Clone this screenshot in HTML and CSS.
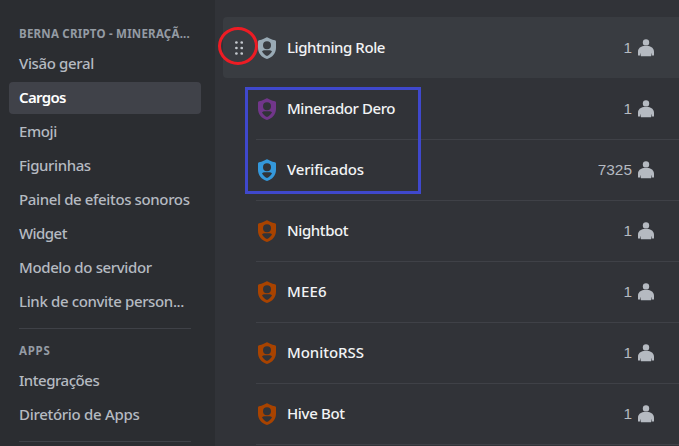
FILE: index.html
```html
<!DOCTYPE html>
<html lang="pt-BR">
<head>
<meta charset="utf-8">
<title>Cargos</title>
<link rel="stylesheet" href="styles.css">
</head>
<body>
<svg class="defs" width="0" height="0" aria-hidden="true">
  <symbol id="shield" viewBox="0 0 18 22">
    <path fill-rule="evenodd" d="M9 0C10 .9 14 2.900 17 3.300Q18 3.500 18 4.500V11C18 16 14.600 20.400 9 22C3.400 20.400 0 16 0 11V4.500Q0 3.500 1 3.300C4 2.900 8 .9 9 0ZM9 4.300A4 4 0 0 0 9 12.300A4 4 0 0 0 9 4.300ZM4 14.200C5 16.300 6.800 18 9 18.900C11.200 18 13 16.300 14 14.200C13.300 13.500 12.400 13.300 11.600 13.300H6.400C5.600 13.300 4.700 13.500 4 14.200Z"/>
  </symbol>
  <symbol id="person" viewBox="0 0 16 18">
    <circle cx="8" cy="3.400" r="3.200"/>
    <path d="M0 16.500V12.800C0 9.500 2.500 7.500 5.500 7H10.500C13.500 7.500 16 9.500 16 12.800V16.500H13.600V14.500H13.100V17.300H2.900V14.500H2.400V16.500Z"/>
  </symbol>
  <symbol id="grip" viewBox="0 0 8 14">
    <circle cx="1.400" cy="1.500" r="1.350"/><circle cx="6.700" cy="1.500" r="1.350"/>
    <circle cx="1.400" cy="7" r="1.350"/><circle cx="6.700" cy="7" r="1.350"/>
    <circle cx="1.400" cy="12.500" r="1.350"/><circle cx="6.700" cy="12.500" r="1.350"/>
  </symbol>
</svg>
<div class="app">
  <nav class="sidebar">
    <h2 class="heading server">BERNA CRIPTO - MINERAÇÃ...</h2>
    <a class="item"><span class="t1">Visão geral</span></a>
    <a class="item active"><span class="t2">Cargos</span></a>
    <a class="item"><span class="t3">Emoji</span></a>
    <a class="item"><span class="t4">Figurinhas</span></a>
    <a class="item"><span class="t5">Painel de efeitos sonoros</span></a>
    <a class="item"><span class="t6">Widget</span></a>
    <a class="item"><span class="t7">Modelo do servidor</span></a>
    <a class="item"><span class="t8">Link de convite person...</span></a>
    <hr class="rule">
    <h2 class="heading apps">APPS</h2>
    <a class="item"><span class="t9">Integrações</span></a>
    <a class="item"><span class="t10">Diretório de Apps</span></a>
    <hr class="rule">
  </nav>
  <main class="roles">
    <div class="role hovered"><svg class="grip"><use href="#grip"/></svg><svg class="shield silver"><use href="#shield"/></svg><span class="name r1">Lightning Role</span><span class="count">1</span><svg class="person"><use href="#person"/></svg></div>
    <div class="role"><svg class="shield purple"><use href="#shield"/></svg><span class="name r2">Minerador Dero</span><span class="count">1</span><svg class="person"><use href="#person"/></svg></div>
    <div class="role"><svg class="shield blue"><use href="#shield"/></svg><span class="name r3">Verificados</span><span class="count">7325</span><svg class="person"><use href="#person"/></svg></div>
    <div class="role"><svg class="shield"><use href="#shield"/></svg><span class="name r4">Nightbot</span><span class="count">1</span><svg class="person"><use href="#person"/></svg></div>
    <div class="role"><svg class="shield"><use href="#shield"/></svg><span class="name r5">MEE6</span><span class="count">1</span><svg class="person"><use href="#person"/></svg></div>
    <div class="role"><svg class="shield"><use href="#shield"/></svg><span class="name r6">MonitoRSS</span><span class="count">1</span><svg class="person"><use href="#person"/></svg></div>
    <div class="role"><svg class="shield"><use href="#shield"/></svg><span class="name r7">Hive Bot</span><span class="count">1</span><svg class="person"><use href="#person"/></svg></div>
  </main>
  <div class="mark-circle"></div>
  <div class="mark-box"></div>
</div>
</body>
</html>
```
FILE: styles.css
```css
* { box-sizing: border-box; }
body { margin: 0; background: #313338; font-family: "Noto Sans", sans-serif; }
.defs { position: absolute; }
.app { position: relative; display: flex; width: 679px; height: 446px; overflow: hidden; }
.sidebar { width: 215px; flex: none; background: #2b2d31; padding: 26px 14px 0 9px; }
.heading { margin: 0 10px; height: 16px; font-size: 11.5px; line-height: 16px; font-weight: 700; color: #949ba4; white-space: nowrap; }
.server { margin-bottom: 6px; letter-spacing: .23px; }
.apps { margin-bottom: 6px; letter-spacing: .75px; }
.item { display: flex; align-items: center; height: 32px; margin-bottom: 2px; padding: 0 10px 2px; border-radius: 4px; font-size: 15px; line-height: 20px; font-weight: 500; color: #b5bac1; white-space: nowrap; }
.active { background: #404249; color: #fff; font-weight: 600; }
.rule { height: 1px; margin: 10px 10px 14px; border: 0; background: #3f4147; }
.t1 { letter-spacing: -.35px; }
.t2 { letter-spacing: -.65px; }
.t3 { letter-spacing: -.4px; }
.t4 { letter-spacing: -.4px; }
.t5 { letter-spacing: -.37px; }
.t6 { letter-spacing: -.55px; }
.t7 { letter-spacing: -.37px; }
.t8 { letter-spacing: -.36px; }
.t9 { letter-spacing: -.47px; }
.t10 { letter-spacing: -.3px; }
.roles { flex: 1; padding: 17px 0 0 8px; }
.role { display: flex; align-items: center; height: 61px; margin-left: 33px; padding: 0 25px 0 2px; border-bottom: 1px solid #3f4147; }
.hovered { margin: 0 0 1px; padding-left: 12px; background: #393c41; border-bottom: 0; border-radius: 4px 0 0 4px; }
.grip { width: 8px; height: 14px; margin-right: 15px; fill: #c4c9ce; }
.shield { width: 18px; height: 22px; flex: none; fill: #a84300; }
.silver { fill: #99aab5; }
.purple { fill: #71368a; }
.blue { fill: #3498db; }
.name { flex: 1; margin-left: 11px; padding-bottom: 2px; font-size: 15px; line-height: 20px; font-weight: 500; color: #f2f3f5; white-space: nowrap; }
.r1 { letter-spacing: -.42px; }
.r2 { letter-spacing: -.42px; }
.r3 { letter-spacing: -.2px; }
.r4 { letter-spacing: -.4px; }
.r5 { letter-spacing: .2px; }
.r6 { letter-spacing: -.05px; }
.r7 { letter-spacing: -.35px; }
.count { margin-right: 6px; font-family: "Liberation Sans", sans-serif; font-size: 15.4px; line-height: 20px; color: #b5bac1; }
.person { width: 16px; height: 18px; fill: #b5bac1; }
.mark-circle { position: absolute; left: 218px; top: 27px; width: 40px; height: 38px; border: 3px solid #ed1c24; border-radius: 50%; }
.mark-box { position: absolute; left: 245px; top: 87px; width: 176px; height: 107px; border: 3px solid #3f48cc; }
```
